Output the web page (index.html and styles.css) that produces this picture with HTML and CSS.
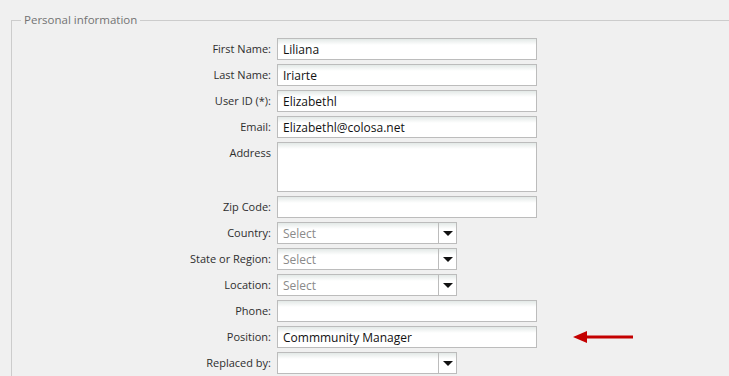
FILE: index.html
```html
<html>
<head>
<title>Personal information</title>
<link rel="stylesheet" href="styles.css">
</head>
<body>

<div class="page">
	<fieldset class="infoBox">
		<legend>Personal information</legend>
		<div class="formGrid">
			<label>First Name:</label>
			<div class="field"><input type="text" value="Liliana"></div>

			<label>Last Name:</label>
			<div class="field"><input type="text" value="Iriarte"></div>

			<label>User ID (*):</label>
			<div class="field"><input type="text" value="Elizabethl"></div>

			<label>Email:</label>
			<div class="field"><input type="text" value="Elizabethl@colosa.net"></div>

			<label class="top">Address</label>
			<div class="field"><textarea></textarea></div>

			<label>Zip Code:</label>
			<div class="field"><input type="text" value=""></div>

			<label>Country:</label>
			<div class="field"><div class="combo"><span class="placeholder">Select</span><span class="btn"><i></i></span></div></div>

			<label>State or Region:</label>
			<div class="field"><div class="combo"><span class="placeholder">Select</span><span class="btn"><i></i></span></div></div>

			<label>Location:</label>
			<div class="field"><div class="combo"><span class="placeholder">Select</span><span class="btn"><i></i></span></div></div>

			<label>Phone:</label>
			<div class="field"><input type="text" value=""></div>

			<label>Position:</label>
			<div class="field">
				<input type="text" value="Commmunity Manager">
				<svg class="pointer" width="62" height="14" viewBox="0 0 62 14">
					<polygon points="0,7 14,1 14,13" fill="#c40000"/>
					<rect x="12" y="5.5" width="48" height="3" fill="#c40000"/>
				</svg>
			</div>

			<label>Replaced by:</label>
			<div class="field"><div class="combo"><span class="placeholder"></span><span class="btn"><i></i></span></div></div>
		</div>
	</fieldset>
</div>

</body>
</html>
```

FILE: styles.css
```css
body {
    margin: 0;
    background-color: #f0f0f0;
    font-family: "Open Sans", "DejaVu Sans", sans-serif;
    overflow: hidden;
}
.page {
    padding: 12px 0 0 11px;
}
fieldset.infoBox {
    margin: 0;
    padding: 0 9px 20px;
    border: 1px solid #cccccc;
    border-right: none;
}
fieldset.infoBox legend {
    padding: 0 3px;
    font-size: 11.5px;
    line-height: 16px;
    color: #737373;
}
.formGrid {
    display: grid;
    grid-template-columns: 250px 1fr;
    column-gap: 6px;
    row-gap: 4px;
    padding-top: 10px;
}
.formGrid label {
    text-align: right;
    font-size: 11px;
    line-height: 22px;
    color: #2e2e2e;
}
.formGrid label.top {
    line-height: 18px;
    padding-top: 2px;
}
.field {
    position: relative;
    display: flex;
    align-items: center;
}
input, textarea, .combo {
    box-sizing: border-box;
    border: 1px solid #bcbcbc;
    background: linear-gradient(#e3e9e7, #ffffff 6px);
    font-family: "Open Sans", "DejaVu Sans", sans-serif;
    font-size: 12px;
    color: #111111;
    margin: 0;
    outline: none;
}
input {
    width: 260px;
    height: 22px;
    padding: 1px 5px 0;
}
textarea {
    width: 260px;
    height: 50px;
    resize: none;
    display: block;
}
.combo {
    width: 180px;
    height: 22px;
    display: flex;
}
.combo .placeholder {
    flex: 1;
    padding: 1px 0 0 5px;
    line-height: 20px;
    color: #8a8a8a;
}
.combo .btn {
    width: 17px;
    border-left: 1px solid #bcbcbc;
    display: flex;
    align-items: center;
    justify-content: center;
}
.combo .btn i {
    width: 0;
    height: 0;
    border-left: 5px solid transparent;
    border-right: 5px solid transparent;
    border-top: 5px solid #111111;
}
.pointer {
    position: absolute;
    left: 296px;
    top: 4px;
}
```
